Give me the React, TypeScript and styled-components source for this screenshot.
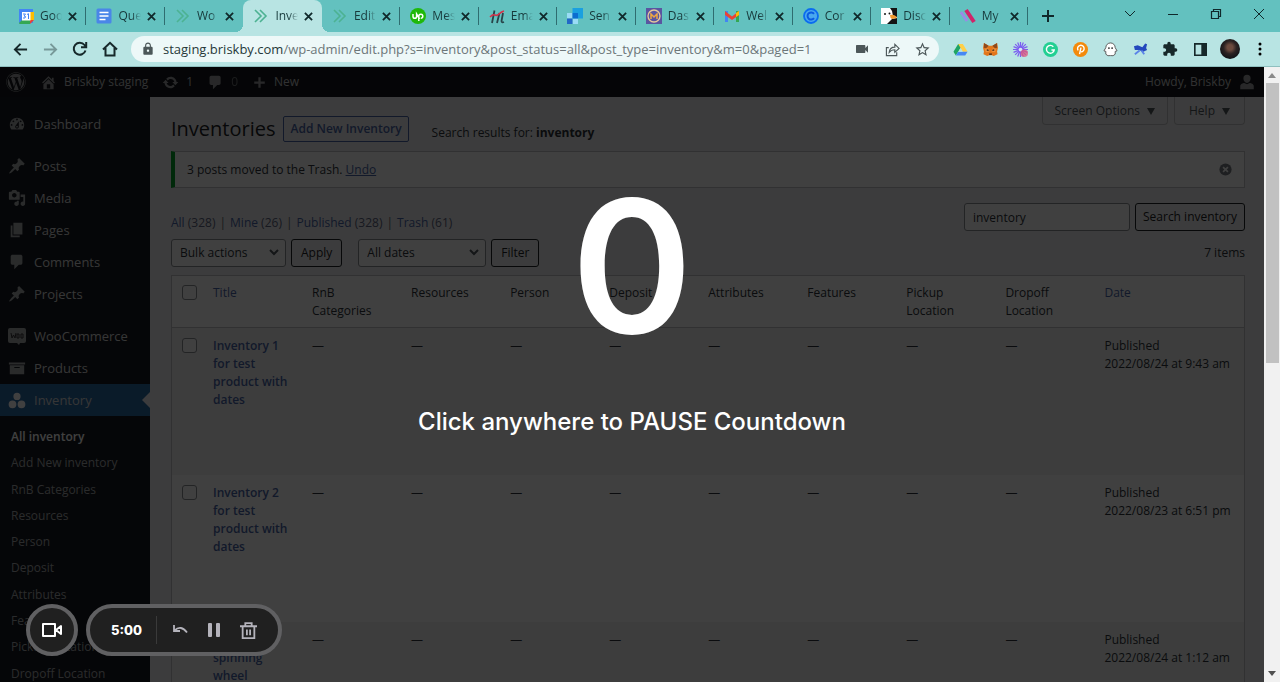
import React, { useState } from 'react';
import styled, { createGlobalStyle } from 'styled-components';
import { FaWordpress } from 'react-icons/fa';
import { MdLock, MdVideocam, MdExtension, MdStarBorder } from 'react-icons/md';

const GlobalStyle = createGlobalStyle`
  *, *::before, *::after { box-sizing: border-box; }
  html, body, #root { height: 100%; }
  body {
    margin: 0;
    overflow: hidden;
    font-family: 'Open Sans', 'Noto Sans', sans-serif;
    font-size: 12px;
    line-height: 18px;
    color: #2c3338;
  }
  button, input, select { font: inherit; color: inherit; }
  button { padding: 0; border: 0; background: none; cursor: pointer; }
  a { color: #4a66a8; text-decoration: none; }
  ul { list-style: none; margin: 0; padding: 0; }
  svg { display: block; flex: none; }
`;

/* ---------- browser frame ---------- */

const Window = styled.div`
  display: flex;
  flex-direction: column;
  height: 100vh;
`;

const TabStrip = styled.header`
  display: flex;
  flex: none;
  height: 32px;
  padding-left: 8px;
  background: #63c1bf;
  color: #17393b;
`;

const TabList = styled.div`
  display: flex;
  flex: 1;
  min-width: 0;
`;

const Tab = styled.div<{ $active?: boolean; $bar?: boolean }>`
  position: relative;
  display: flex;
  flex: 1 1 0;
  min-width: 0;
  align-items: center;
  gap: 6px;
  padding: 0 9px 0 10px;
  border-radius: 8px 8px 0 0;
  background: ${p => (p.$active ? '#b8e4e3' : 'transparent')};

  &::before {
    content: '';
    display: ${p => (p.$active ? 'block' : 'none')};
    position: absolute;
    left: -8px;
    right: -8px;
    bottom: 0;
    height: 8px;
    background:
      radial-gradient(circle at 0 0, transparent 8px, #b8e4e3 8px) left / 8px 8px no-repeat,
      radial-gradient(circle at 100% 0, transparent 8px, #b8e4e3 8px) right / 8px 8px no-repeat;
  }

  &::after {
    content: '';
    display: ${p => (p.$bar ? 'block' : 'none')};
    position: absolute;
    right: 0;
    top: 7px;
    width: 1px;
    height: 18px;
    background: #2f6d70;
  }
`;

const TabLabel = styled.span`
  flex: 1;
  min-width: 0;
  overflow: hidden;
  white-space: nowrap;
  mask-image: linear-gradient(to right, #000 60%, transparent 100%);
`;

const CloseButton = styled.button`
  flex: none;
  color: #10292b;
`;

const NewTabButton = styled.button`
  display: grid;
  place-items: center;
  width: 40px;
  margin-right: 40px;
  color: #10292b;
`;

const WindowButton = styled.button`
  display: grid;
  place-items: center;
  width: 43px;
  height: 27px;
  color: #10292b;
`;

const Toolbar = styled.div`
  display: flex;
  flex: none;
  align-items: center;
  height: 35px;
  padding: 0 5px;
  border-bottom: 1px solid #8fbfbf;
  background: #b8e4e3;
  color: #16282a;
`;

const ToolButton = styled.button<{ $dim?: boolean }>`
  display: grid;
  flex: none;
  place-items: center;
  width: 30px;
  height: 26px;
  opacity: ${p => (p.$dim ? 0.4 : 1)};
`;

const Omnibox = styled.div`
  display: flex;
  flex: 1;
  min-width: 0;
  align-items: center;
  height: 26px;
  margin: 0 6px;
  padding: 0 2px 0 10px;
  border-radius: 13px;
  background: #edf8f8;
  color: #4c5759;
`;

const Address = styled.div`
  flex: 1;
  min-width: 0;
  margin-left: 8px;
  overflow: hidden;
  font-size: 13px;
  white-space: nowrap;
  color: #6c7678;

  b { font-weight: 400; color: #27383a; }
`;

const Avatar = styled.span`
  display: block;
  width: 20px;
  height: 20px;
  border-radius: 50%;
  background: radial-gradient(circle at 50% 42%, #6b4a3e 0 18%, #2b2222 42%, #101216 75%);
`;

const Viewport = styled.div`
  display: flex;
  flex: 1;
  min-height: 0;
`;

const Page = styled.div`
  position: relative;
  display: flex;
  flex: 1;
  flex-direction: column;
  min-width: 0;
  overflow: hidden;
  background: #f0f0f1;
`;

const ScrollTrack = styled.div`
  display: flex;
  flex: none;
  flex-direction: column;
  align-items: center;
  justify-content: space-between;
  width: 16px;
  background: #f1f1f1;
`;

const ScrollArrow = styled.span<{ $down?: boolean }>`
  display: grid;
  place-items: center;
  height: 16px;
  transform: ${p => (p.$down ? 'rotate(180deg)' : 'none')};
`;

const ScrollBody = styled.div`
  flex: 1;
  width: 13px;
`;

const ScrollThumb = styled.div`
  height: 48%;
  background: #c1c1c1;
`;

/* ---------- admin bar and menu ---------- */

const AdminBar = styled.div`
  display: flex;
  flex: none;
  align-items: center;
  justify-content: space-between;
  height: 30px;
  padding: 0 8px 0 6px;
  background: #14171c;
  color: #c3c4c7;

  a { color: inherit; }
`;

const BarGroup = styled.div`
  display: flex;
  align-items: center;
  gap: 14px;
`;

const BarLink = styled.a<{ $faint?: boolean }>`
  display: flex;
  align-items: center;
  gap: 7px;
  line-height: 30px;

  span { opacity: ${p => (p.$faint ? 0.5 : 1)}; }
  svg { opacity: 0.8; }
`;

const Body = styled.div`
  display: flex;
  flex: 1;
  min-height: 0;
`;

const Sidebar = styled.nav`
  flex: none;
  width: 150px;
  padding-top: 11px;
  overflow: hidden;
  background: #171a20;
`;

const MenuLink = styled.a<{ $active?: boolean; $gap?: boolean }>`
  position: relative;
  display: flex;
  align-items: center;
  gap: 8px;
  height: 32px;
  margin-top: ${p => (p.$gap ? 10 : 0)}px;
  padding-left: 8px;
  font-size: 13px;
  color: #d8d8d8;
  background: ${p => (p.$active ? '#2b6ba5' : 'transparent')};

  svg { color: ${p => (p.$active ? '#ffffff' : '#a7aaad')}; }

  &::after {
    content: '';
    display: ${p => (p.$active ? 'block' : 'none')};
    position: absolute;
    top: 8px;
    right: 0;
    border: 8px solid transparent;
    border-left: 0;
    border-right-color: #f0f0f1;
  }
`;

const SubMenu = styled.ul`
  display: grid;
  grid-auto-rows: 1fr;
  min-height: 263px;
  margin-top: 8px;
`;

const SubLink = styled.a<{ $current?: boolean }>`
  display: block;
  padding-left: 11px;
  line-height: 26px;
  white-space: nowrap;
  font-weight: ${p => (p.$current ? 600 : 400)};
  color: ${p => (p.$current ? '#ffffff' : '#a9abae')};
`;

/* ---------- content ---------- */

const Main = styled.main`
  flex: 1;
  min-width: 0;
  padding: 0 19px 0 21px;
  overflow: hidden;
`;

const PageHead = styled.div`
  display: flex;
  justify-content: space-between;
  height: 54px;
`;

const HeadTitle = styled.div`
  display: flex;
  align-items: center;
  height: 26px;
  margin-top: 19px;
`;

const H1 = styled.h1`
  margin: 0 8px 0 0;
  font-size: 20px;
  font-weight: 400;
  line-height: 26px;
  color: #1d2327;
`;

const AddLink = styled.a`
  padding: 0 6px;
  border: 1px solid #4a66a8;
  border-radius: 2px;
  font-weight: 600;
  line-height: 24px;
`;

const SubTitle = styled.span`
  align-self: flex-start;
  margin-left: 23px;
  line-height: 34px;
  white-space: nowrap;
`;

const ScreenMeta = styled.div`
  display: flex;
  gap: 6px;
`;

const MetaButton = styled.button`
  display: flex;
  align-items: center;
  justify-content: center;
  gap: 7px;
  min-width: 71px;
  height: 28px;
  padding: 0 12px;
  border: 1px solid #c3c4c7;
  border-top: 0;
  border-radius: 0 0 4px 4px;
  color: #50575e;
`;

const Notice = styled.div`
  display: flex;
  align-items: center;
  justify-content: space-between;
  height: 37px;
  margin-bottom: 15px;
  padding: 0 12px;
  border: 1px solid #c3c4c7;
  border-left: 4px solid #00a32a;
  background: #ffffff;

  a { text-decoration: underline; }
`;

const Row = styled.div<{ $end?: boolean }>`
  display: flex;
  align-items: ${p => (p.$end ? 'flex-end' : 'center')};
  justify-content: space-between;
  height: 28px;
  margin-bottom: 8px;
`;

const Views = styled.ul`
  display: flex;
  line-height: 16px;

  li + li::before { content: '|'; margin: 0 4px; color: #646970; }
  span { color: #5d6480; }
`;

const Group = styled.form`
  display: flex;
  gap: 5px;
`;

const TextInput = styled.input`
  width: 166px;
  height: 28px;
  padding: 0 8px;
  border: 1px solid #8c8f94;
  border-radius: 3px;
  background: #ffffff;
`;

const Button = styled.button<{ $tight?: boolean }>`
  height: 28px;
  padding: 0 ${p => (p.$tight ? 7 : 9)}px;
  border: 1px solid #1d2327;
  border-radius: 3px;
  color: #1d2327;
  white-space: nowrap;
`;

const SelectBox = styled.label<{ $wide?: boolean }>`
  position: relative;
  display: block;
  width: ${p => (p.$wide ? 128 : 115)}px;
  margin-left: ${p => (p.$wide ? 11 : 0)}px;

  svg { position: absolute; right: 7px; top: 10px; pointer-events: none; }
`;

const Select = styled.select`
  width: 100%;
  height: 28px;
  padding: 0 8px;
  appearance: none;
  border: 1px solid #8c8f94;
  border-radius: 3px;
  background: #ffffff;
`;

const Table = styled.table`
  width: 100%;
  table-layout: fixed;
  border: 1px solid #c3c4c7;
  border-spacing: 0;
  background: #ffffff;

  th, td {
    padding: 8px 8px 0;
    vertical-align: top;
    text-align: left;
    font-weight: 400;
  }
  td { padding-top: 9px; }
  thead th { height: 52px; border-bottom: 1px solid #c3c4c7; }
  tbody tr { height: 147px; }
  tbody tr:nth-child(odd) { background: #f3f4f4; }
  tbody a { font-weight: 600; }
`;

const Col = styled.col<{ $kind: 'check' | 'field' | 'rest' }>`
  width: ${p => ({ check: '33px', field: '9.24%', rest: 'auto' }[p.$kind])};
`;

const Check = styled.input`
  display: block;
  appearance: none;
  width: 15px;
  height: 15px;
  margin: 1px 0 0 2px;
  border: 1px solid #8c8f94;
  border-radius: 3px;
  background: #ffffff;
`;

/* ---------- recorder ---------- */

const Countdown = styled.button`
  position: absolute;
  inset: 0;
  display: flex;
  flex-direction: column;
  align-items: center;
  padding-top: 89px;
  background: rgba(0, 0, 0, 0.75);
  font-family: Inter, sans-serif;
  font-weight: 500;
  color: #ffffff;
`;

const Digit = styled.span`
  font-size: 184px;
  font-weight: 600;
  line-height: 220px;
`;

const Hint = styled.span`
  margin-top: 30px;
  font-size: 24px;
  line-height: 32px;
`;

const Recorder = styled.div`
  position: absolute;
  left: 26px;
  bottom: 26px;
  display: flex;
  gap: 8px;
  font-family: Inter, sans-serif;
  color: #ffffff;
`;

const CameraButton = styled.button`
  display: grid;
  place-items: center;
  width: 52px;
  height: 52px;
  border: 4px solid #606062;
  border-radius: 50%;
  background: #202020;
`;

const Pill = styled.div`
  display: flex;
  align-items: center;
  width: 196px;
  height: 52px;
  padding: 0 13px 0 21px;
  border: 4px solid #606062;
  border-radius: 26px;
  background: #202020;
`;

const Timer = styled.time`
  flex: 1;
  font-size: 13px;
  font-weight: 800;
`;

const PillTools = styled.div`
  display: flex;
  padding-left: 6px;
  border-left: 1px solid #3a3a3a;
`;

const PillButton = styled.button`
  display: grid;
  place-items: center;
  width: 34px;
  height: 28px;
  color: #b4b3bb;
`;

/* ---------- drawings ---------- */

const dash = {
  dashboard:
    'M3.76 16h12.48c1.1-1.37 1.76-3.11 1.76-5 0-4.42-3.58-8-8-8s-8 3.58-8 8c0 1.89.66 3.63 1.76 5zM10 4c.55 0 1 .45 1 1s-.45 1-1 1-1-.45-1-1 .45-1 1-1zM6 6c.55 0 1 .45 1 1s-.45 1-1 1-1-.45-1-1 .45-1 1-1zm8 0c.55 0 1 .45 1 1s-.45 1-1 1-1-.45-1-1 .45-1 1-1zm-5.37 5.55L12 7v6c0 1.1-.9 2-2 2s-2-.9-2-2c0-.57.24-1.08.63-1.45zM4 10c.55 0 1 .45 1 1s-.45 1-1 1-1-.45-1-1 .45-1 1-1zm12 0c.55 0 1 .45 1 1s-.45 1-1 1-1-.45-1-1 .45-1 1-1zm-5 3c0-.55-.45-1-1-1s-1 .45-1 1 .45 1 1 1 1-.45 1-1z',
  pin: 'M10.44 3.02l1.82-1.82 6.36 6.35-1.83 1.82c-1.05-.68-2.48-.57-3.41.36l-.75.75c-.92.93-1.04 2.35-.35 3.41l-1.83 1.82-2.41-2.41-2.8 2.79c-.42.42-3.38 2.71-3.8 2.29s1.86-3.39 2.28-3.81l2.79-2.79L4.1 9.36l1.83-1.82c1.05.69 2.48.57 3.4-.36l.75-.75c.93-.92 1.05-2.35.36-3.41z',
  media:
    'M13 11V4c0-.55-.45-1-1-1h-1.67L9 1H5L3.67 3H2c-.55 0-1 .45-1 1v7c0 .55.45 1 1 1h10c.55 0 1-.45 1-1zM7 4.5c1.38 0 2.5 1.12 2.5 2.5S8.38 9.5 7 9.5 4.5 8.38 4.5 7 5.62 4.5 7 4.5zM14 6h5v10.5c0 1.38-1.12 2.5-2.5 2.5S14 17.88 14 16.5s1.12-2.5 2.5-2.5c.17 0 .34.02.5.05V9h-3V6zm-4 8.05V13h2v3.5c0 1.38-1.12 2.5-2.5 2.5S7 17.88 7 16.5 8.12 14 9.5 14c.17 0 .34.02.5.05z',
  page: 'M6 15V2h10v13H6zm-1 1h8v2H3V5h2v11z',
  comment: 'M5 2h9c1.1 0 2 .9 2 2v7c0 1.1-.9 2-2 2h-2l-5 5v-5H5c-1.1 0-2-.9-2-2V4c0-1.1.9-2 2-2z',
  archive: 'M19 4v2H1V4h18zM2 7h16v10H2V7zm11 3V9H7v1h6z',
  home: 'M16 8.5l1.53 1.53-1.06 1.06L10 4.6l-6.47 6.49-1.06-1.06L10 2.5l4 4v-2h2v4zm-6-2.46l6 5.99V18H4v-5.97zM12 17v-5H8v5h4z',
  update:
    'M10.2 3.28c3.53 0 6.43 2.61 6.92 6h2.08l-3.5 4-3.5-4h2.32c-.45-1.97-2.21-3.45-4.32-3.45-1.45 0-2.73.71-3.54 1.78L4.95 5.66C6.23 4.2 8.11 3.28 10.2 3.28zm-.4 13.44c-3.52 0-6.43-2.61-6.92-6H.8l3.5-4c1.17 1.33 2.33 2.67 3.5 4H5.48c.45 1.97 2.21 3.45 4.32 3.45 1.45 0 2.73-.71 3.54-1.78l1.71 1.95c-1.28 1.46-3.15 2.38-5.25 2.38z',
  plus: 'M8.5 3h3v5.5H17v3h-5.5V17h-3v-5.5H3v-3h5.5z',
  groups: 'M10 2a4 4 0 1 1 0 8 4 4 0 0 1 0-8zM5 10.5a4.3 4.3 0 1 1 0 8.6 4.3 4.3 0 0 1 0-8.6zM15 10.5a4.3 4.3 0 1 1 0 8.6 4.3 4.3 0 0 1 0-8.6z',
  user: 'M10 2a4 4 0 0 1 4 4c0 2.5-1.8 5-4 5S6 8.500 6 6a4 4 0 0 1 4-4zM2.500 18v-3.500c0-2.500 3-3.500 4.500-3.500l3 1.500 3-1.500c1.500 0 4.500 1 4.500 3.500V18z',
};

function Dash({ name, size = 18 }: { name: keyof typeof dash; size?: number }) {
  return (
    <svg width={size} height={size} viewBox="0 0 20 20" fill="currentColor" aria-hidden="true">
      <path d={dash[name]} />
    </svg>
  );
}

function WooIcon() {
  return (
    <svg width="18" height="18" viewBox="0 0 18 18" aria-hidden="true">
      <path d="M2 1h14q2 0 2 2v11q0 2-2 2h-4l-1 2-2-2H2q-2 0-2-2V3q0-2 2-2z" fill="currentColor" />
      <path d="M3 6l1 5 1.500-3L7 11l1-5M9 7v4h2V7zM13 7v4h2V7z" fill="none" stroke="#333" />
    </svg>
  );
}

function Stroke({ d, size = 16, w = 1.8, box = 16 }: { d: string; size?: number; w?: number; box?: number }) {
  return (
    <svg width={size} height={size} viewBox={`0 0 ${box} ${box}`} fill="none" stroke="currentColor" strokeWidth={w} aria-hidden="true">
      <path d={d} />
    </svg>
  );
}

const favicons: Record<string, React.ReactNode> = {
  calendar: (
    <>
      <path d="M1 1h14v14H1z" fill="#4285f4" />
      <path d="M12 4h4v8h-4z" fill="#fbbc04" />
      <path d="M4 12h8v4H2q-1 0-1-1z" fill="#34a853" />
      <path d="M12 12h4l-4 4z" fill="#ea4335" />
      <path d="M4 4h8.500v8.500H4z" fill="#fff" />
      <path d="M5 6h2.500L6 8l1.500.5L7 10H5M9 6.500l1.500-.8V11" fill="none" stroke="#4285f4" />
    </>
  ),
  docs: (
    <>
      <rect x="0.500" y="0.500" width="15" height="15" rx="1.500" fill="#4a86e8" />
      <path d="M3.500 4.500h9M3.500 8h9M3.500 11.500h6" stroke="#fff" strokeWidth="1.600" />
    </>
  ),
  chevron: <path d="M2 2l6 6-6 6M7 2l6 6-6 6" fill="none" stroke="#4cb292" strokeWidth="1.600" />,
  upwork: (
    <>
      <circle cx="8" cy="8" r="8" fill="#1fb80a" />
      <path d="M3 6v2.500a1.800 1.800 0 0 0 3.600 0V6l3 5M8.800 13V8a2 2 0 1 1 2 2.200" fill="none" stroke="#fff" strokeWidth="1.500" />
    </>
  ),
  hemail: (
    <>
      <path d="M5.500 2.500L3 15M10.500 5L8 15M14 5l-1.500 8q0 2 2.500 1" fill="none" stroke="#284449" strokeWidth="1.800" />
      <path d="M1 9q3-3 5-2t4-1 5-3" fill="none" stroke="#d8324a" strokeWidth="1.600" />
    </>
  ),
  sendgrid: (
    <>
      <path d="M5.500 0H16v10.500H5.500z" fill="#1aa0e0" />
      <path d="M0 5h5.500v5.500H0z" fill="#9adcf5" />
      <path d="M5.500 10.500H11V16H5.500z" fill="#9adcf5" />
      <path d="M0 10.500h5.500V16H0z" fill="#2268c7" />
      <path d="M5.500 5H11v5.500H5.500z" fill="#0c6ed0" />
    </>
  ),
  motion: (
    <>
      <rect width="16" height="16" fill="#5a55a0" />
      <circle cx="8" cy="8" r="6" fill="none" stroke="#e8c99b" strokeWidth="1.300" />
      <path d="M5 11V6l3 3 3-3v5" fill="none" stroke="#f0a840" strokeWidth="1.500" />
    </>
  ),
  gmail: (
    <>
      <path d="M1 3h3v11H1z" fill="#4285f4" />
      <path d="M12 3h3v11h-3z" fill="#34a853" />
      <path d="M1 3l7 5.500L15 3v4l-7 5-7-5z" fill="#ea4335" />
      <path d="M12 5l3-2v4l-3 2z" fill="#fbbc04" />
    </>
  ),
  calendly: (
    <>
      <circle cx="8" cy="8" r="7" fill="#4aa8ee" stroke="#0a6cf0" strokeWidth="1.800" />
      <path d="M11 5.800a3.600 3.600 0 1 0 0 4.400" fill="none" stroke="#0a5be0" strokeWidth="2" />
    </>
  ),
  bird: (
    <>
      <rect width="16" height="16" fill="#fff" />
      <path d="M9 0h7v9l-4-1-1-5z" fill="#141414" />
      <path d="M11 11l5-1v6H6z" fill="#141414" />
      <path d="M9 7q5-1 7 3l-5 1q-2-1-2-4z" fill="#f29a2e" />
      <circle cx="4" cy="6" r="1" fill="#141414" />
      <circle cx="8.500" cy="5.500" r="1" fill="#141414" />
    </>
  ),
  stripes: (
    <>
      <path d="M1 4l6 9" stroke="#9a8ae6" strokeWidth="3" />
      <path d="M6 2l8 12" stroke="#d0246a" strokeWidth="4" />
    </>
  ),
};

const extensions: { label: string; art: React.ReactNode }[] = [
  {
    label: 'Drive',
    art: (
      <>
        <path d="M5.500 2h5L8 6.300 3 14.500.5 10.500z" fill="#1fa463" />
        <path d="M5.500 2h5l5 8.500h-5z" fill="#ffcf48" />
        <path d="M3 14.500l2.500-4h10l-2.500 4z" fill="#4688f4" />
        <path d="M8 6.500l2.300 4H5.700z" fill="#b8e4e3" />
      </>
    ),
  },
  {
    label: 'Wallet',
    art: (
      <>
        <path d="M1 1l5 3h4l5-3 1 5-1 4 .5 3-4 2-2-1h-3l-2 1-4-2L1 10 0 6z" fill="#e2761b" />
        <path d="M1 1l5 3-3 3-2-1zM15 1l-5 3 3 3 2-1z" fill="#8f4a1c" />
        <path d="M2 7l4 0 1 3-4 1zM14 7l-4 0-1 3 4 1z" fill="#f0953f" />
        <path d="M4 8.500l2 .5M12 8.500l-2 .5M6.500 13h3" stroke="#3b2417" strokeWidth="1.400" />
      </>
    ),
  },
  {
    label: 'Recorder',
    art: (
      <>
        <path d="M8 0v16M0 8h16M2.300 2.300l11.400 11.400M2.300 13.700L13.700 2.300M5 .6l6 14.800M.6 5l14.800 6M.6 11L15.400 5M5 15.400L11 .6" stroke="#7a5cf0" strokeWidth="1.300" />
        <circle cx="8" cy="8" r="2" fill="#d6e4f6" />
        <circle cx="12" cy="12" r="4" fill="#e0567a" fillOpacity="0.75" />
      </>
    ),
  },
  {
    label: 'Writing assistant',
    art: (
      <>
        <circle cx="8" cy="8" r="8" fill="#22cf92" />
        <path d="M11 5a4.200 4.200 0 1 0 1 3.500H9" fill="none" stroke="#fff" strokeWidth="1.500" />
      </>
    ),
  },
  {
    label: 'Pins',
    art: (
      <>
        <circle cx="8" cy="8" r="8" fill="#f38a0c" />
        <path d="M5.500 9a3.500 3.500 0 1 1 3 1.500M8.500 6L7 13" fill="none" stroke="#fff" strokeWidth="1.500" />
      </>
    ),
  },
  {
    label: 'Ghost',
    art: (
      <>
        <path d="M3 6a5 5 0 0 1 10 0l2 3.500-2 .5v3q-2 2.500-5 1.500-3 1-5-1.500v-3l-2-.5z" fill="#fff" stroke="#555" />
        <circle cx="6.300" cy="6.500" r="1" fill="#333" />
        <circle cx="9.700" cy="6.500" r="1" fill="#333" />
      </>
    ),
  },
  {
    label: 'Telescope',
    art: (
      <>
        <path d="M1 4.500l4-1 5 2 3-4 2 1-1 4 1 2-4 2-5-2-4 0z" fill="#2348bd" />
        <path d="M2 13l5-4M9 9l3 4" fill="none" stroke="#5b83e8" strokeWidth="2" />
      </>
    ),
  },
];

function Art({ children, size = 15 }: { children: React.ReactNode; size?: number }) {
  return (
    <svg width={size} height={size} viewBox="0 0 16 16" aria-hidden="true">
      {children}
    </svg>
  );
}

/* ---------- data ---------- */

const tabs = [
  ['calendar', 'Goo'],
  ['docs', 'Que'],
  ['chevron', 'Wo'],
  ['chevron', 'Inve'],
  ['chevron', 'Edit'],
  ['upwork', 'Mes'],
  ['hemail', 'Ema'],
  ['sendgrid', 'Sen'],
  ['motion', 'Das'],
  ['gmail', 'Wel'],
  ['calendly', 'Cor'],
  ['bird', 'Disc'],
  ['stripes', 'My'],
];
const activeTab = 3;

const menu: { icon: keyof typeof dash | 'woo'; label: string; gap?: boolean; active?: boolean }[] = [
  { icon: 'dashboard', label: 'Dashboard' },
  { icon: 'pin', label: 'Posts', gap: true },
  { icon: 'media', label: 'Media' },
  { icon: 'page', label: 'Pages' },
  { icon: 'comment', label: 'Comments' },
  { icon: 'pin', label: 'Projects' },
  { icon: 'woo', label: 'WooCommerce', gap: true },
  { icon: 'archive', label: 'Products' },
  { icon: 'groups', label: 'Inventory', active: true },
];

const subMenu = [
  'All inventory',
  'Add New inventory',
  'RnB Categories',
  'Resources',
  'Person',
  'Deposit',
  'Attributes',
  'Features',
  'Pickup Location',
  'Dropoff Location',
];

const views: [string, number][] = [
  ['All', 328],
  ['Mine', 26],
  ['Published', 328],
  ['Trash', 61],
];

const fields = [
  'RnB Categories',
  'Resources',
  'Person',
  'Deposit',
  'Attributes',
  'Features',
  'Pickup Location',
  'Dropoff Location',
];

const rows = [
  { title: 'Inventory 1 for test product with dates', date: '2022/08/24 at 9:43 am' },
  { title: 'Inventory 2 for test product with dates', date: '2022/08/23 at 6:51 pm' },
  { title: 'Inventory spinning wheel', date: '2022/08/24 at 1:12 am' },
];

const chevronDown = 'M1 1l4 4 4-4';

export default function App() {
  const [query, setQuery] = useState('inventory');

  return (
    <Window>
      <GlobalStyle />
      <TabStrip>
        <TabList>
          {tabs.map(([icon, label], i) => (
            <Tab key={i} $active={i === activeTab} $bar={i !== activeTab && i !== activeTab - 1}>
              <Art size={16}>{favicons[icon]}</Art>
              <TabLabel>{label}</TabLabel>
              <CloseButton aria-label={`Close ${label}`}>
                <Stroke d="M1 1l8 8M9 1l-8 8" size={9} box={10} w={2} />
              </CloseButton>
            </Tab>
          ))}
        </TabList>
        <NewTabButton aria-label="New tab">
          <Stroke d="M6 0v12M0 6h12" size={12} box={12} w={2} />
        </NewTabButton>
        <WindowButton aria-label="Search tabs"><Stroke d="M1 3l5 5 5-5" size={12} box={12} w={1} /></WindowButton>
        <WindowButton aria-label="Minimize"><Stroke d="M1 6.500h10" size={12} box={12} w={1} /></WindowButton>
        <WindowButton aria-label="Restore"><Stroke d="M1.500 3.500h7v7h-7zM3.500 3.500v-2h7v7h-2" size={12} box={12} w={1.2} /></WindowButton>
        <WindowButton aria-label="Close"><Stroke d="M1 1l10 10M11 1L1 11" size={12} box={12} w={1} /></WindowButton>
      </TabStrip>

      <Toolbar>
        <ToolButton aria-label="Back"><Stroke d="M15 8H2M8 2L2 8l6 6" size={15} w={2} /></ToolButton>
        <ToolButton aria-label="Forward" $dim><Stroke d="M1 8h13M8 2l6 6-6 6" size={15} w={2} /></ToolButton>
        <ToolButton aria-label="Reload"><Stroke d="M13.500 9.500A6 6 0 1 1 12.500 4L14 6M14.200 1v5.200H9" w={2} /></ToolButton>
        <ToolButton aria-label="Home"><Stroke d="M1 8.500L8 1.800l7 6.700M3.500 7v7.500h9V7" w={2} /></ToolButton>
        <Omnibox>
          <MdLock size={14} />
          <Address>
            <b>staging.briskby.com</b>/wp-admin/edit.php?s=inventory&amp;post_status=all&amp;post_type=inventory&amp;m=0&amp;paged=1
          </Address>
          <ToolButton aria-label="Camera in use"><MdVideocam size={16} /></ToolButton>
          <ToolButton aria-label="Share">
            <Stroke d="M4 6H1.500v8.500h11V11M4.500 11q.5-5.500 6-5.500V2.500L15 6.800 10.500 11V8.300q-4 0-6 2.700z" size={15} w={1.2} />
          </ToolButton>
          <ToolButton aria-label="Bookmark"><MdStarBorder size={17} /></ToolButton>
        </Omnibox>
        {extensions.map(e => (
          <ToolButton key={e.label} aria-label={e.label}><Art>{e.art}</Art></ToolButton>
        ))}
        <ToolButton aria-label="Extensions"><MdExtension size={16} /></ToolButton>
        <ToolButton aria-label="Side panel">
          <Art size={13}>
            <path d="M1 1h14v14H1z" fill="none" stroke="currentColor" strokeWidth="2" />
            <path d="M9 1h6v14H9z" fill="currentColor" />
          </Art>
        </ToolButton>
        <ToolButton aria-label="Profile"><Avatar /></ToolButton>
        <ToolButton aria-label="Menu">
          <Art size={16}>
            <circle cx="8" cy="3" r="1.500" />
            <circle cx="8" cy="8" r="1.500" />
            <circle cx="8" cy="13" r="1.500" />
          </Art>
        </ToolButton>
      </Toolbar>

      <Viewport>
        <Page>
          <AdminBar>
            <BarGroup>
              <BarLink href="#about" aria-label="About WordPress"><FaWordpress size={20} /></BarLink>
              <BarLink href="#site"><Dash name="home" size={17} /><span>Briskby staging</span></BarLink>
              <BarLink href="#updates"><Dash name="update" size={17} /><span>1</span></BarLink>
              <BarLink href="#comments" $faint><Dash name="comment" size={17} /><span>0</span></BarLink>
              <BarLink href="#new"><Dash name="plus" size={15} /><span>New</span></BarLink>
            </BarGroup>
            <BarLink href="#profile"><span>Howdy, Briskby</span><Dash name="user" size={18} /></BarLink>
          </AdminBar>

          <Body>
            <Sidebar>
              {menu.map(m => (
                <MenuLink key={m.label} href={`#${m.label}`} $active={m.active} $gap={m.gap}>
                  {m.icon === 'woo' ? <WooIcon /> : <Dash name={m.icon} />}
                  {m.label}
                </MenuLink>
              ))}
              <SubMenu>
                {subMenu.map((s, i) => (
                  <li key={s}><SubLink href={`#${s}`} $current={i === 0}>{s}</SubLink></li>
                ))}
              </SubMenu>
            </Sidebar>

            <Main>
              <PageHead>
                <HeadTitle>
                  <H1>Inventories</H1>
                  <AddLink href="#add">Add New Inventory</AddLink>
                  <SubTitle>Search results for: <strong>inventory</strong></SubTitle>
                </HeadTitle>
                <ScreenMeta>
                  <MetaButton>Screen Options <Art size={8}><path d="M0 2h16L8 16z" fill="currentColor" /></Art></MetaButton>
                  <MetaButton>Help <Art size={8}><path d="M0 2h16L8 16z" fill="currentColor" /></Art></MetaButton>
                </ScreenMeta>
              </PageHead>

              <Notice>
                <span>3 posts moved to the Trash. <a href="#undo">Undo</a></span>
                <button aria-label="Dismiss this notice">
                  <Art size={13}>
                    <circle cx="8" cy="8" r="7.500" fill="#787c82" />
                    <path d="M5 5l6 6M11 5l-6 6" stroke="#fff" strokeWidth="2" />
                  </Art>
                </button>
              </Notice>

              <Row $end>
                <Views>
                  {views.map(([name, n]) => (
                    <li key={name}><a href={`#${name}`}>{name} <span>({n})</span></a></li>
                  ))}
                </Views>
                <Group onSubmit={e => e.preventDefault()}>
                  <TextInput aria-label="Search inventory" value={query} onChange={e => setQuery(e.target.value)} />
                  <Button $tight>Search inventory</Button>
                </Group>
              </Row>

              <Row>
                <Group onSubmit={e => e.preventDefault()}>
                  <SelectBox>
                    <Select aria-label="Bulk actions"><option>Bulk actions</option></Select>
                    <svg width="10" height="7" fill="none" stroke="#50575e" strokeWidth="2"><path d={chevronDown} /></svg>
                  </SelectBox>
                  <Button>Apply</Button>
                  <SelectBox $wide>
                    <Select aria-label="Filter by date"><option>All dates</option></Select>
                    <svg width="10" height="7" fill="none" stroke="#50575e" strokeWidth="2"><path d={chevronDown} /></svg>
                  </SelectBox>
                  <Button>Filter</Button>
                </Group>
                <span>7 items</span>
              </Row>

              <Table>
                <colgroup>
                  <Col $kind="check" />
                  <Col $kind="field" />
                  {fields.map(f => <Col key={f} $kind="field" />)}
                  <Col $kind="rest" />
                </colgroup>
                <thead>
                  <tr>
                    <th><Check type="checkbox" aria-label="Select all" /></th>
                    <th><a href="#sort-title">Title</a></th>
                    {fields.map(f => <th key={f}>{f}</th>)}
                    <th><a href="#sort-date">Date</a></th>
                  </tr>
                </thead>
                <tbody>
                  {rows.map(r => (
                    <tr key={r.title}>
                      <td><Check type="checkbox" aria-label={`Select ${r.title}`} /></td>
                      <td><a href="#edit">{r.title}</a></td>
                      {fields.map(f => <td key={f}>—</td>)}
                      <td>Published<br />{r.date}</td>
                    </tr>
                  ))}
                </tbody>
              </Table>
            </Main>
          </Body>

          <Countdown>
            <Digit>0</Digit>
            <Hint>Click anywhere to PAUSE Countdown</Hint>
          </Countdown>

          <Recorder>
            <CameraButton aria-label="Camera">
              <svg width="20" height="14" viewBox="0 0 20 14" fill="none" stroke="currentColor" strokeWidth="2" strokeLinejoin="round">
                <path d="M1 1h12v12H1zM14 7l5-4v8z" />
              </svg>
            </CameraButton>
            <Pill>
              <Timer>5:00</Timer>
              <PillTools>
                <PillButton aria-label="Restart">
                  <Stroke d="M2 3v6h6M2.500 8.500Q9 2.500 15 10.500" size={17} box={17} w={1.8} />
                </PillButton>
                <PillButton aria-label="Pause">
                  <svg width="12" height="14" fill="currentColor"><rect width="4" height="14" rx="1" /><rect x="8" width="4" height="14" rx="1" /></svg>
                </PillButton>
                <PillButton aria-label="Delete">
                  <Stroke d="M0 4h16M2.500 4v11.200h11V4M5 4V1h6v3M6.500 7v5.500M9.500 7v5.500" size={17} box={16} w={1.7} />
                </PillButton>
              </PillTools>
            </Pill>
          </Recorder>
        </Page>

        <ScrollTrack aria-hidden="true">
          <ScrollArrow><svg width="8" height="5" fill="#8a8a8a"><path d="M0 5l4-5 4 5z" /></svg></ScrollArrow>
          <ScrollBody><ScrollThumb /></ScrollBody>
          <ScrollArrow $down><svg width="8" height="5" fill="#505050"><path d="M0 5l4-5 4 5z" /></svg></ScrollArrow>
        </ScrollTrack>
      </Viewport>
    </Window>
  );
}
